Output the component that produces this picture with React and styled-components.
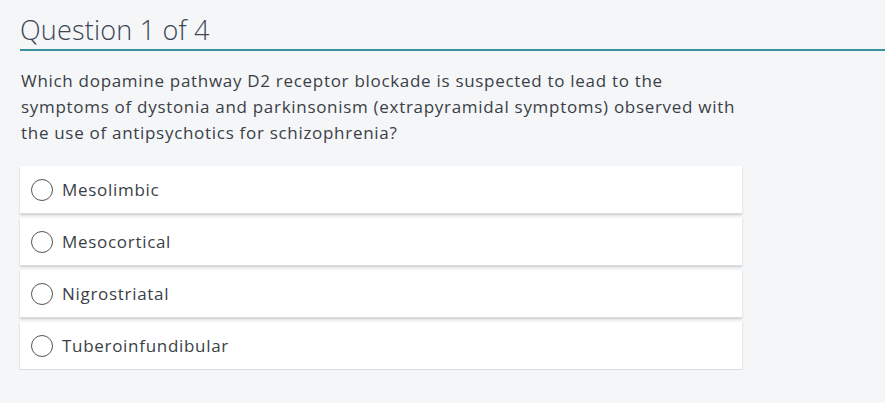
import React from "react";
import styled, { createGlobalStyle } from "styled-components";

const Global = createGlobalStyle`
  html, body { margin: 0; padding: 0; background: #f5f6f8; }
  body { font-family: "Open Sans", Lato, sans-serif; color: #333; }
`;

const Page = styled.div`
  padding: 12px 0 0 20px;
`;

const Header = styled.h1`
  margin: 0;
  font-weight: 300;
  font-size: 27px;
  line-height: 35px;
  letter-spacing: 0.2px;
  color: #3d4654;
  padding-bottom: 2px;
  border-bottom: 2px solid #3a919f;
`;

const Prompt = styled.p`
  margin: 17px 0 20px 1px;
  width: 725px;
  font-size: 17px;
  line-height: 26px;
  letter-spacing: 0.7px;
  color: #3a3f47;
`;

const Options = styled.div`
  display: flex;
  flex-direction: column;
  gap: 4px;
  width: 722px;
`;

const Option = styled.label`
  display: flex;
  align-items: center;
  gap: 9px;
  height: 48px;
  padding: 0 0 0 11px;
  box-sizing: border-box;
  background: #fff;
  box-shadow: 0 1px 2px rgba(0, 0, 0, 0.18);
  border-bottom: 1px solid #dcdcdc;
  font-size: 17px;
  letter-spacing: 0.7px;
  color: #3a3f47;
  cursor: pointer;
`;

const Radio = styled.span`
  width: 22px;
  height: 22px;
  box-sizing: border-box;
  border: 1.5px solid #555;
  border-radius: 50%;
  flex: none;
`;

const choices = ["Mesolimbic", "Mesocortical", "Nigrostriatal", "Tuberoinfundibular"];

export default function App() {
  return (
    <>
      <Global />
      <Page>
        <Header>Question 1 of 4</Header>
        <Prompt>
          Which dopamine pathway D2 receptor blockade is suspected to lead to the
          symptoms of dystonia and parkinsonism (extrapyramidal symptoms) observed with
          the use of antipsychotics for schizophrenia?
        </Prompt>
        <Options>
          {choices.map((c) => (
            <Option key={c}>
              <Radio />
              {c}
            </Option>
          ))}
        </Options>
      </Page>
    </>
  );
}
